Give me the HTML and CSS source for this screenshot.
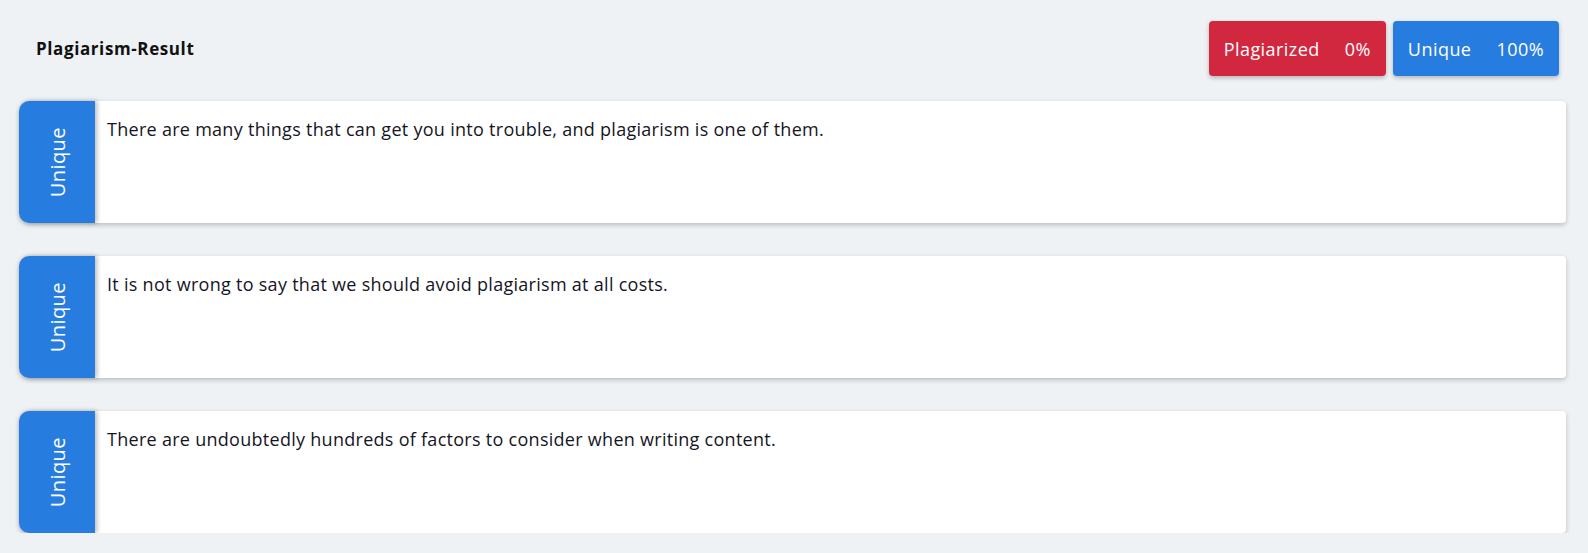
FILE: index.html
```html
<!DOCTYPE html>
<html lang="en">
<head>
<meta charset="utf-8">
<title>Plagiarism Result</title>
<link rel="stylesheet" href="styles.css">
</head>
<body>
<div class="page">
  <header class="header">
    <h1 class="title">Plagiarism-Result</h1>
    <div class="badges">
      <div class="badge badge-red"><span>Plagiarized</span><span class="pct">0%</span></div>
      <div class="badge badge-blue"><span>Unique</span><span class="pct">100%</span></div>
    </div>
  </header>
  <div class="results">
    <div class="result">
      <div class="tag"><span class="tag-text">Unique</span></div>
      <div class="body">There are many things that can get you into trouble, and plagiarism is one of them.</div>
    </div>
    <div class="result">
      <div class="tag"><span class="tag-text">Unique</span></div>
      <div class="body">It is not wrong to say that we should avoid plagiarism at all costs.</div>
    </div>
    <div class="result">
      <div class="tag"><span class="tag-text">Unique</span></div>
      <div class="body">There are undoubtedly hundreds of factors to consider when writing content.</div>
    </div>
  </div>
</div>
</body>
</html>
```

FILE: styles.css
```css
* { box-sizing: border-box; }
html, body { margin: 0; padding: 0; }
body {
  background: #eef2f5;
  font-family: "Open Sans", "Liberation Sans", sans-serif;
  color: #15151f;
}
.page {
  padding: 21px 22px 0 19px;
}
.header {
  display: flex;
  justify-content: space-between;
  align-items: center;
  height: 55px;
  padding: 0 7px 0 17px;
}
.title {
  margin: 0;
  font-size: 17px;
  font-weight: 700;
  letter-spacing: 0.6px;
  color: #111;
}
.badges {
  display: flex;
  gap: 7px;
}
.badge {
  display: flex;
  align-items: center;
  height: 55px;
  padding: 0 15px;
  border-radius: 4px;
  color: #fff;
  font-size: 18px;
  letter-spacing: 0.45px;
  box-shadow: 0 2px 4px rgba(0,0,0,0.25);
}
.badge .pct { margin-left: 25px; }
.badge-red { background: #d2283f; }
.badge-blue { background: #277cdf; }
.results {
  margin-top: 25px;
  display: flex;
  flex-direction: column;
  gap: 33px;
}
.result {
  display: flex;
  height: 122px;
  background: #fff;
  border-radius: 10px 4px 4px 10px;
  box-shadow: 0 2px 5px rgba(0,0,0,0.22);
}
.tag {
  width: 76px;
  flex: none;
  background: #277cdf;
  border-radius: 10px 0 0 10px;
  display: flex;
  align-items: center;
  justify-content: center;
  box-shadow: 2px 0 5px rgba(0,0,0,0.28);
  position: relative;
}
.tag-text {
  writing-mode: vertical-rl;
  transform: rotate(180deg);
  color: #fff;
  font-size: 20px;
  letter-spacing: 0.45px;
}
.body {
  padding: 16px 12px;
  font-size: 18px;
  letter-spacing: 0.28px;
  line-height: 1.4;
}
```
